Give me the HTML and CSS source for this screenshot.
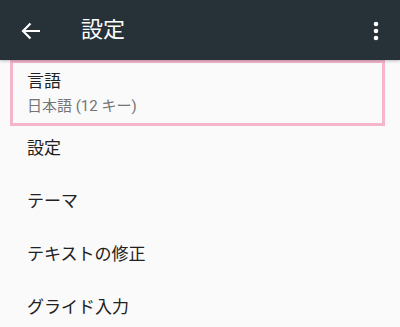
FILE: index.html
```html
<!DOCTYPE html>
<html lang="ja">
<head>
<meta charset="utf-8">
<link rel="stylesheet" href="styles.css">
</head>
<body>
<header class="appbar">
  <svg class="back" width="20" height="18" viewBox="0 0 20 18"><path d="M19 9H2M9.5 1.5L2 9l7.5 7.5" fill="none" stroke="#fff" stroke-width="2.2"/></svg>
  <h1 class="title">設定</h1>
  <svg class="more" width="6" height="20" viewBox="0 0 6 20"><circle cx="3" cy="3" r="2.3" fill="#fff"/><circle cx="3" cy="10" r="2.3" fill="#fff"/><circle cx="3" cy="17" r="2.3" fill="#fff"/></svg>
</header>
<main class="list">
  <div class="item two-line highlight">
    <div class="primary">言語</div>
    <div class="secondary">日本語 (12 キー)</div>
  </div>
  <div class="item">設定</div>
  <div class="item">テーマ</div>
  <div class="item">テキストの修正</div>
  <div class="item">グライド入力</div>
</main>
</body>
</html>
```
FILE: styles.css
```css
html, body { margin: 0; padding: 0; }
body {
  background: #fafafa;
  font-family: Roboto, "Noto Sans CJK JP", "Noto Sans", sans-serif;
  color: #212121;
  width: 400px;
  height: 327px;
  overflow: hidden;
}
.appbar {
  height: 60px;
  background: #263238;
  display: flex;
  align-items: center;
  box-shadow: 0 1px 3px rgba(0,0,0,0.25);
  position: relative;
  z-index: 1;
}
.back { margin-left: 21px; margin-top: 2px; }
.title {
  margin: 0 0 0 40px;
  font-size: 22px;
  font-weight: 400;
  color: #fff;
  flex: 1;
  line-height: 1;
}
.more { margin-right: 21px; margin-top: 2px; }
.list { display: flex; flex-direction: column; }
.item {
  height: 53px;
  flex: none;
  display: flex;
  align-items: center;
  padding-left: 27px;
  font-size: 17px;
  line-height: 1;
}
.two-line {
  flex-direction: column;
  align-items: flex-start;
  justify-content: center;
  height: 60px;
  gap: 9px;
}
.highlight {
  margin: 0 15px -4px 10px;
  border: 3px solid #f5b6cb;
  padding-left: 14px;
}
.secondary { font-size: 15px; color: #757575; }
```
